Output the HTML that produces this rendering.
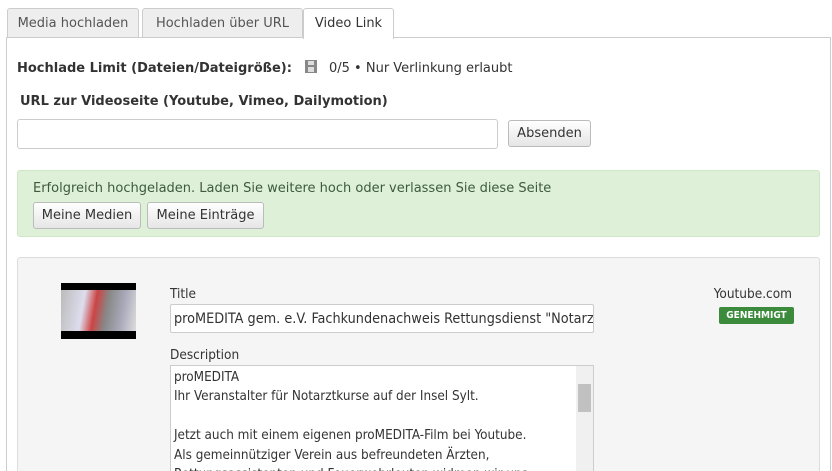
<!DOCTYPE html>
<html><head><meta charset="utf-8"><style>
html,body{margin:0;width:832px;height:471px;overflow:hidden}
body{background:#fff;font-family:"DejaVu Sans",Verdana,sans-serif;font-size:13px;color:#333;position:relative}
.a{position:absolute}
.tab{position:absolute;top:8px;height:28px;border:1px solid #ccc;border-bottom:none;border-radius:3px 3px 0 0;background:#eee;color:#555;line-height:29px;text-align:center;font-size:13px}
.btn{position:absolute;border:1px solid #bbb;border-radius:3px;background:linear-gradient(#fff,#e6e6e6);font-size:13px;line-height:25px;text-align:center;color:#333}
.c{font-family:"DejaVu Sans Condensed","Liberation Sans Narrow","DejaVu Sans",sans-serif}
</style></head><body>
<div class="a" style="left:6px;top:37px;width:823px;height:440px;border:1px solid #ccc;border-bottom:none"></div>
<div class="tab" style="left:7px;width:130px">Media hochladen</div>
<div class="tab" style="left:142px;width:159px">Hochladen über URL</div>
<div class="tab" style="left:303px;width:89px;height:30px;background:#fff;color:#333">Video Link</div>
<div class="a" style="left:17px;top:61px;font-weight:bold">Hochlade Limit (Dateien/Dateigröße):</div>
<div class="a" style="left:305px;top:60px;width:12px;height:13px;background:#888"><div class="a" style="left:3px;top:1px;width:6px;height:4px;background:#ddd"></div><div class="a" style="left:3px;top:7px;width:6px;height:5px;background:#ddd"></div></div>
<div class="a" style="left:329px;top:61px">0/5 • Nur Verlinkung erlaubt</div>
<div class="a" style="left:20px;top:94px;font-weight:bold">URL zur Videoseite (Youtube, Vimeo, Dailymotion)</div>
<div class="a" style="left:17px;top:119px;width:479px;height:28px;border:1px solid #ccc;border-radius:3px"></div>
<div class="btn" style="left:508px;top:120px;width:81px">Absenden</div>
<div class="a" style="left:17px;top:170px;width:801px;height:65px;background:#dff0d8;border:1px solid #d0e6c6;border-radius:3px"></div>
<div class="a" style="left:33px;top:181px;color:#3c5a3c">Erfolgreich hochgeladen. Laden Sie weitere hoch oder verlassen Sie diese Seite</div>
<div class="btn" style="left:33px;top:202px;width:106px">Meine Medien</div>
<div class="btn" style="left:147px;top:202px;width:115px">Meine Einträge</div>
<div class="a" style="left:17px;top:257px;width:801px;height:230px;background:#f5f5f5;border:1px solid #ddd;border-radius:3px"></div>
<div class="a" style="left:61px;top:283px;width:75px;height:56px;background:#000"><div class="a" style="left:0;top:7px;width:75px;height:41px;background:linear-gradient(100deg,#bbb,#dde 30%,#c44 45%,#888 60%,#aab 80%,#ddd)"></div></div>
<div class="a c" style="left:170px;top:286px;font-size:13.5px">Title</div>
<div class="a c" style="left:170px;top:304px;height:29px;border:1px solid #ccc;border-radius:2px;background:#fff;line-height:29px;padding-left:3px;overflow:hidden;white-space:nowrap;box-sizing:border-box;width:424px;font-size:14.3px">proMEDITA gem. e.V. Fachkundenachweis Rettungsdienst "Notarzt</div>
<div class="a c" style="left:170px;top:347px;font-size:13.5px">Description</div>
<div class="a c" style="left:170px;top:365px;width:424px;height:120px;border:1px solid #ccc;background:#fff;box-sizing:border-box;padding:2px 3px;line-height:19.4px;font-size:13.4px">proMEDITA<br>Ihr Veranstalter für Notarztkurse auf der Insel Sylt.<br><br>Jetzt auch mit einem eigenen proMEDITA-Film bei Youtube.<br>Als gemeinnütziger Verein aus befreundeten Ärzten,<br>Rettungsassistenten und Feuerwehrleuten widmen wir uns</div>
<div class="a" style="left:576px;top:366px;width:17px;height:110px;background:#f0f0f0"><div class="a" style="left:2px;top:18px;width:13px;height:28px;background:#c1c1c1"></div></div>
<div class="a c" style="left:690px;top:286px;width:102px;text-align:right;font-size:13.5px">Youtube.com</div>
<div class="a c" style="left:719px;top:307px;width:75px;height:17px;background:#3c8a3c;border-radius:2px;color:#fff;font-size:10px;font-weight:bold;text-align:center;line-height:17px">GENEHMIGT</div>
</body></html>
